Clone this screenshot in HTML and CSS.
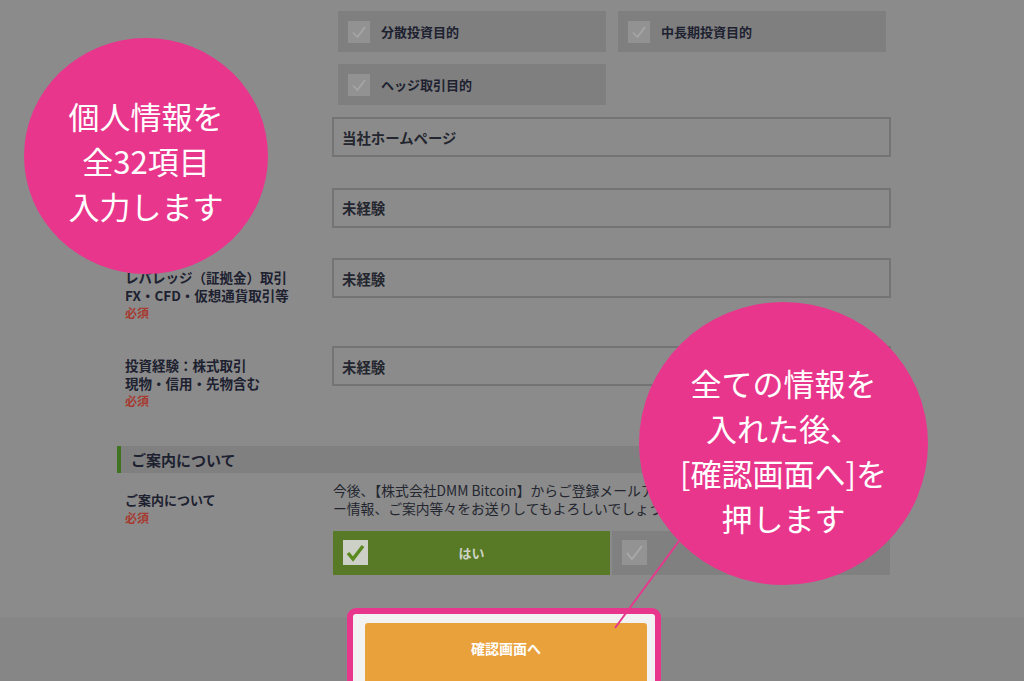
FILE: index.html
```html
<!DOCTYPE html>
<html lang="ja">
<head>
<meta charset="utf-8">
<title>口座開設 入力</title>
<link rel="stylesheet" href="styles.css">
</head>
<body>
<div class="page">
  <main class="form">
    <div class="row row--tiles">
      <div class="label"></div>
      <div class="tiles">
        <div class="tile"><span class="cb"><svg viewBox="0 0 22 22" width="22" height="22"><polyline points="5,11.5 9.5,16 17,6" /></svg></span><span>分散投資目的</span></div>
        <div class="tile"><span class="cb"><svg viewBox="0 0 22 22" width="22" height="22"><polyline points="5,11.5 9.5,16 17,6" /></svg></span><span>中長期投資目的</span></div>
        <div class="tile"><span class="cb"><svg viewBox="0 0 22 22" width="22" height="22"><polyline points="5,11.5 9.5,16 17,6" /></svg></span><span>ヘッジ取引目的</span></div>
      </div>
    </div>

    <div class="row">
      <div class="label label--hidden"></div>
      <div class="select">当社ホームページ</div>
    </div>

    <div class="row">
      <div class="label label--hidden"></div>
      <div class="select">未経験</div>
    </div>

    <div class="row">
      <div class="label">レバレッジ（証拠金）取引<br>FX・CFD・仮想通貨取引等<span class="req">必須</span></div>
      <div class="select">未経験</div>
    </div>

    <div class="row">
      <div class="label">投資経験：株式取引<br>現物・信用・先物含む<span class="req">必須</span></div>
      <div class="select">未経験</div>
    </div>

    <h2 class="section">ご案内について</h2>

    <div class="row row--notice">
      <div class="label">ご案内について<span class="req">必須</span></div>
      <div class="notice">
        <p class="notice-text">今後、【株式会社DMM Bitcoin】からご登録メールアドレス宛にキャンペーンやセミナ<br>ー情報、ご案内等々をお送りしてもよろしいでしょうか。</p>
        <div class="choices">
          <div class="choice choice--yes"><span class="cb cb--big"><svg viewBox="0 0 25 25" width="25" height="25"><polyline points="5,13 10,19 20,6" /></svg></span><span class="choice-label">はい</span></div>
          <div class="choice choice--no"><span class="cb cb--big"><svg viewBox="0 0 25 25" width="25" height="25"><polyline points="5,13 10,19 20,6" /></svg></span><span class="choice-label">いいえ</span></div>
        </div>
      </div>
    </div>
  </main>

  <footer class="footer">
    <div class="footer-inner">
      <div class="highlight">
        <button class="submit" type="button">確認画面へ</button>
      </div>
    </div>
  </footer>

  <div class="bubble bubble--one"><p>個人情報を<br>全32項目<br>入力します</p></div>
  <div class="bubble bubble--two"><p>全ての情報を<br>入れた後、<br>[確認画面へ]を<br>押します</p></div>
  <svg class="pointer" viewBox="0 0 1024 681" width="1024" height="681"><line x1="679" y1="541" x2="615" y2="628" /></svg>
</div>
</body>
</html>
```

FILE: styles.css
```css
* { box-sizing: border-box; }

html, body {
  margin: 0;
  padding: 0;
}

body {
  background: #8b8b8b;
  font-family: "Noto Sans CJK JP", "Noto Sans", sans-serif;
  color: #1d2130;
}

p { margin: 0; }

.page {
  position: relative;
  width: 1024px;
  height: 681px;
  overflow: hidden;
  display: flex;
  flex-direction: column;
  padding-top: 11px;
}

.form {
  margin-left: 117px;
  width: 774px;
}

.row {
  display: grid;
  grid-template-columns: 215px 559px;
  margin-bottom: 24.5px;
}

.row--tiles { margin-bottom: 12px; }

.label {
  padding: 11px 0 0 8px;
  font-size: 13.5px;
  font-weight: 700;
  line-height: 17.5px;
  white-space: nowrap;
}

.label--hidden { min-height: 46px; }

.row--tiles .label { padding: 0; }

.req {
  display: block;
  color: #a63a30;
  font-size: 12px;
}

.tiles {
  display: grid;
  grid-template-columns: 268px 268px;
  gap: 12px;
  padding-left: 6px;
}

.tile {
  height: 41px;
  background: #7f7f7f;
  display: flex;
  align-items: center;
  gap: 11px;
  padding-left: 10px;
  font-size: 13px;
  font-weight: 700;
}

.cb {
  width: 22px;
  height: 22px;
  flex: none;
  background: #929292;
  display: flex;
}

.cb polyline {
  fill: none;
  stroke: #a6a6a6;
  stroke-width: 1.6;
}

.select {
  height: 40px;
  border: 2px solid #747474;
  display: flex;
  align-items: center;
  padding-left: 8px;
  font-size: 14.4px;
  font-weight: 700;
  color: #23262f;
}

.section {
  margin: 36px 0 8px;
  height: 27px;
  background: #808080;
  border-left: 4px solid #3f7320;
  padding-left: 10px;
  font-size: 15px;
  font-weight: 700;
  display: flex;
  align-items: center;
}

.row--notice .label {
  padding-top: 10.5px;
  font-size: 13px;
  line-height: 18px;
}

.notice { padding-left: 1px; }

.notice-text {
  font-size: 13.8px;
  line-height: 18px;
  white-space: nowrap;
  color: #23262f;
}

.choices {
  display: grid;
  grid-template-columns: 277px 278px;
  gap: 2px;
  margin-top: 14px;
}

.choice {
  height: 44px;
  display: flex;
  align-items: center;
  padding: 0 35px 0 10px;
  font-size: 13px;
  font-weight: 700;
}

.choice-label {
  flex: 1;
  text-align: center;
}

.choice--yes {
  background: #587a26;
  color: #cdd3c3;
}

.choice--no {
  background: #808080;
  color: #a8a8a8;
}

.cb--big {
  width: 25px;
  height: 25px;
}

.choice--yes .cb { background: #cdd0c7; }
.choice--yes .cb polyline { stroke: #5b8a1e; stroke-width: 3.5; }
.choice--no .cb { background: #939393; }
.choice--no .cb polyline { stroke: #a9a9a9; stroke-width: 1.8; }

.footer {
  margin-top: auto;
  height: 64px;
  flex: none;
  background: #868686;
  display: flex;
}

.footer-inner {
  margin-left: 117px;
  width: 774px;
  display: flex;
  justify-content: center;
}

.highlight {
  margin-top: -9px;
  height: 90px;
  border: 6px solid #e9368d;
  border-radius: 9px;
  background: #f2f2f2;
  padding: 9px 8px 0 12px;
}

.submit {
  display: flex;
  justify-content: center;
  align-items: flex-start;
  width: 282px;
  height: 70px;
  padding: 16px 0 0;
  border: 0;
  border-radius: 3px;
  background: #e9a13c;
  color: #ffffff;
  font-family: "Noto Sans CJK JP", "Noto Sans", sans-serif;
  font-size: 14px;
  font-weight: 700;
  line-height: 18px;
}

.bubble {
  position: absolute;
  z-index: 2;
  display: flex;
  align-items: center;
  justify-content: center;
  background: #e9368d;
  border-radius: 50%;
  color: #ffffff;
  font-size: 31px;
  line-height: 45px;
  text-align: center;
  white-space: nowrap;
}

.bubble--one {
  left: 24px;
  top: 38px;
  width: 244px;
  height: 236px;
  padding-top: 8px;
}

.bubble--two {
  left: 639px;
  top: 302px;
  width: 289px;
  height: 283px;
  padding-top: 13px;
}

.pointer {
  position: absolute;
  left: 0;
  top: 0;
  z-index: 3;
  pointer-events: none;
}

.pointer line {
  stroke: #e9368d;
  stroke-width: 2;
}
```
